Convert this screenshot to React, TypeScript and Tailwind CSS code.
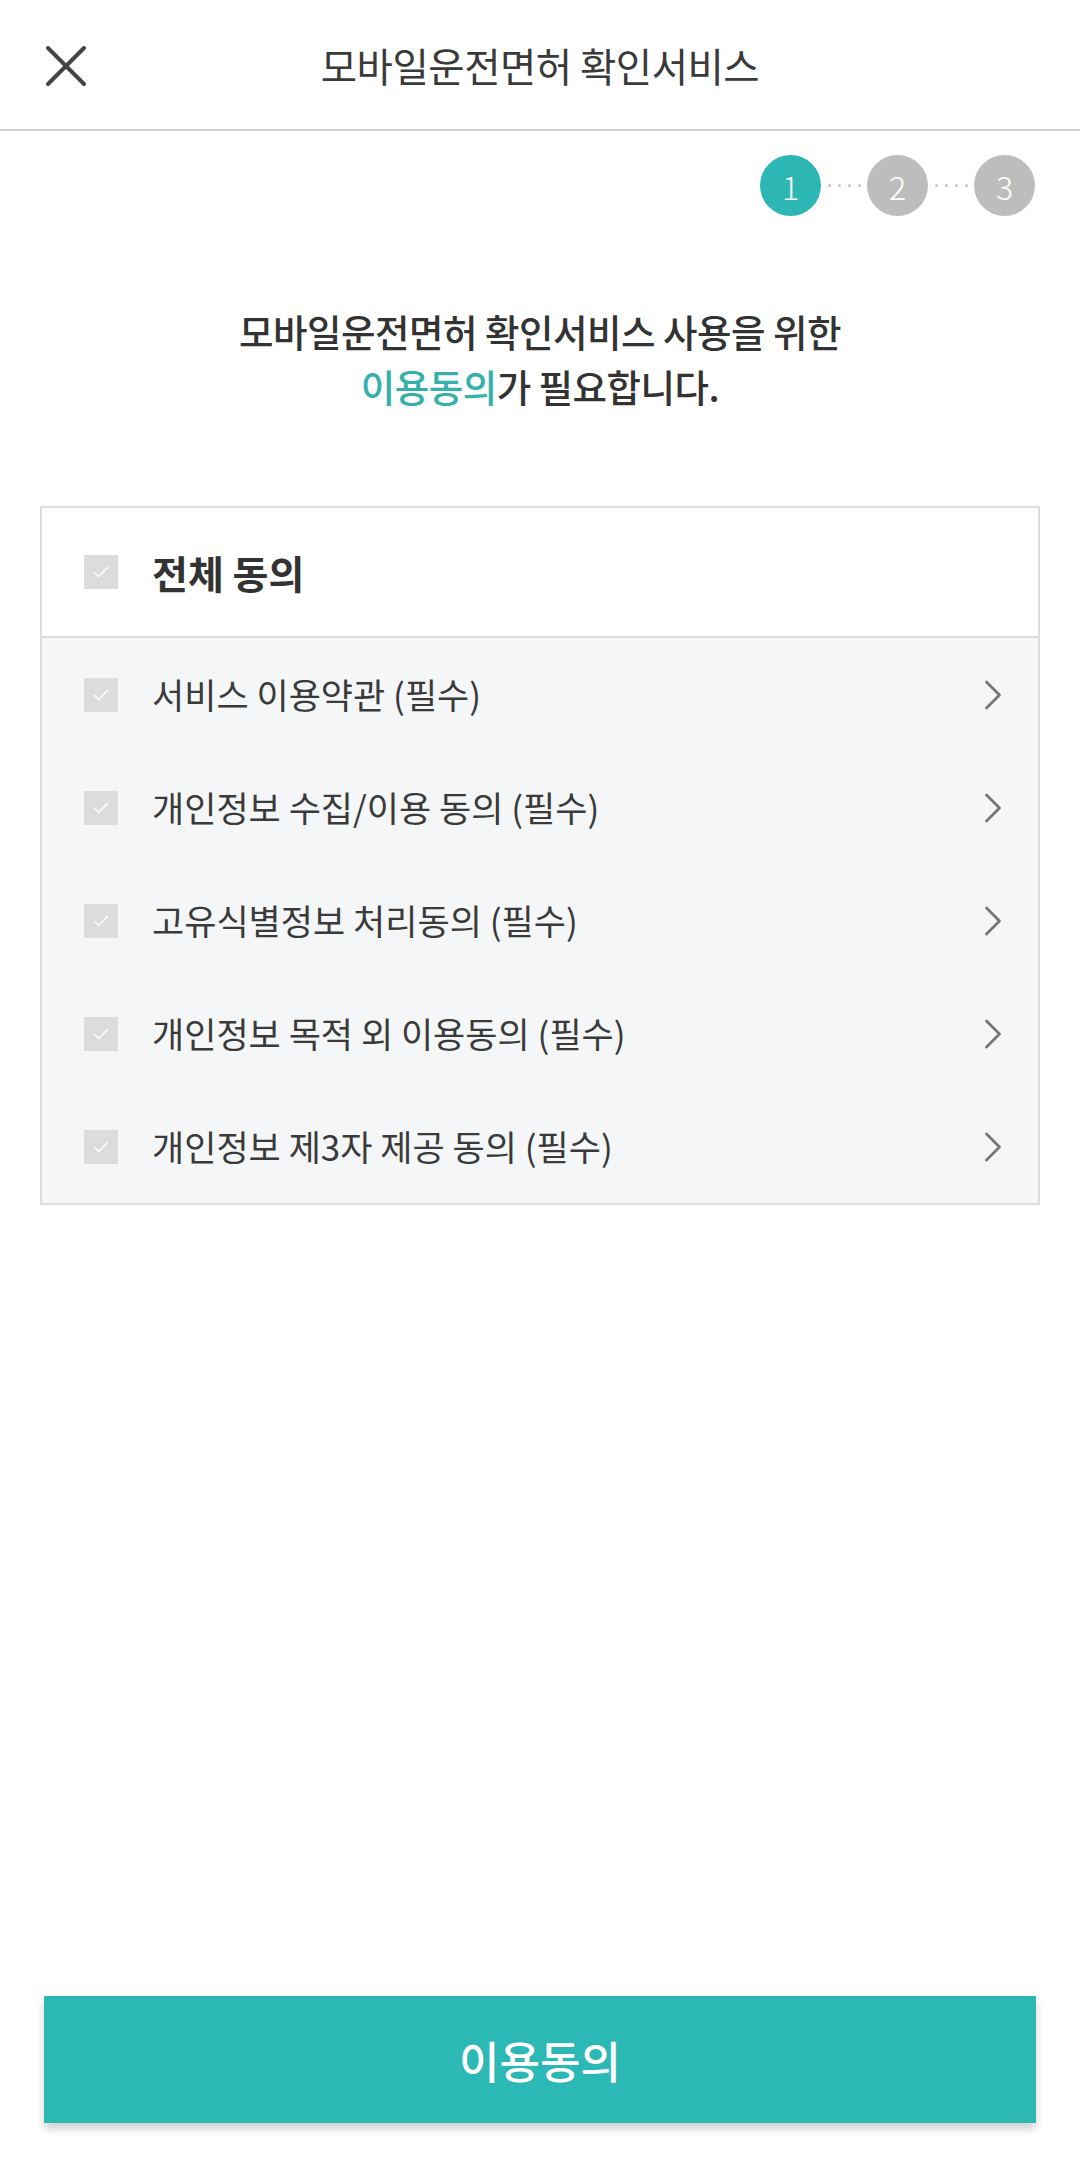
import { ChevronRight } from 'lucide-react';

const FONT = { fontFamily: '"Noto Sans CJK KR", "Noto Sans", sans-serif' };

const TERMS = [
  '서비스 이용약관 (필수)',
  '개인정보 수집/이용 동의 (필수)',
  '고유식별정보 처리동의 (필수)',
  '개인정보 목적 외 이용동의 (필수)',
  '개인정보 제3자 제공 동의 (필수)',
];

function CheckBox() {
  return (
    <div className="w-[34px] h-[34px] bg-[#dcdcdc] flex items-center justify-center shrink-0">
      <svg width="22" height="22" viewBox="0 0 24 24" fill="none" stroke="#ffffff" strokeWidth="1.6" strokeLinecap="round" strokeLinejoin="round">
        <path d="M5 12.5l4.5 4.5L19 7" />
      </svg>
    </div>
  );
}

function Step({ n, active }: { n: number; active?: boolean }) {
  return (
    <div
      className={`w-[61px] h-[61px] rounded-full flex items-center justify-center text-white text-[32px] font-light ${active ? 'bg-[#2cb7b4]' : 'bg-[#bdbdbd]'}`}
    >
      {n}
    </div>
  );
}

function Dots() {
  return (
    <div className="w-[46px] flex items-center justify-center gap-[7px]">
      <span className="w-[3px] h-[3px] rounded-full bg-[#c4c4c4]" />
      <span className="w-[3px] h-[3px] rounded-full bg-[#c4c4c4]" />
      <span className="w-[3px] h-[3px] rounded-full bg-[#c4c4c4]" />
      <span className="w-[3px] h-[3px] rounded-full bg-[#c4c4c4]" />
    </div>
  );
}

export default function App() {
  return (
    <div className="w-[1080px] h-[2158px] bg-white flex flex-col text-[#333333]" style={FONT}>
      {/* Header */}
      <header className="relative h-[131px] border-b-[2px] border-[#cfcfcf] flex items-center justify-center shrink-0">
        <button className="absolute left-[45px] top-[45px]">
          <svg width="42" height="42" viewBox="0 0 42 42" fill="none" stroke="#444444" strokeWidth="4" strokeLinecap="round">
            <path d="M3 3L39 39M39 3L3 39" />
          </svg>
        </button>
        <h1 className="text-[39.5px] text-[#3a3a3a] tracking-[-0.5px]">모바일운전면허 확인서비스</h1>
      </header>

      {/* Stepper */}
      <div className="flex justify-end items-center pr-[45px] pt-[24px]">
        <Step n={1} active />
        <Dots />
        <Step n={2} />
        <Dots />
        <Step n={3} />
      </div>

      {/* Heading */}
      <div className="mt-[87px] text-center text-[37.5px] leading-[55px] font-medium text-[#333333] tracking-[-0.5px]">
        <p>모바일운전면허 확인서비스 사용을 위한</p>
        <p>
          <span className="text-[#36b0ab]">이용동의</span>가 필요합니다.
        </p>
      </div>

      {/* Agreement card */}
      <div className="mx-[40px] mt-[93px] border-[2px] border-[#dddddd]">
        <div className="h-[130px] flex items-center pl-[42px] bg-white border-b-[2px] border-[#dddddd]">
          <CheckBox />
          <span className="ml-[34px] text-[39px] font-bold text-[#333333]">전체 동의</span>
        </div>
        <div className="bg-[#f4f6f7]">
          {TERMS.map((t) => (
            <div key={t} className="h-[113px] flex items-center pl-[42px] pr-[19px]">
              <CheckBox />
              <span className="ml-[34px] text-[35px] text-[#3a3a3a] flex-1">{t}</span>
              <ChevronRight size={52} strokeWidth={1.3} className="text-[#777777]" />
            </div>
          ))}
        </div>
      </div>

      {/* Bottom button */}
      <div className="mt-auto px-[44px] pb-[35px]">
        <button className="w-full h-[127px] bg-[#2cb8b5] text-white text-[44px] font-medium shadow-[0_6px_8px_rgba(0,0,0,0.18)]">
          이용동의
        </button>
      </div>
    </div>
  );
}
